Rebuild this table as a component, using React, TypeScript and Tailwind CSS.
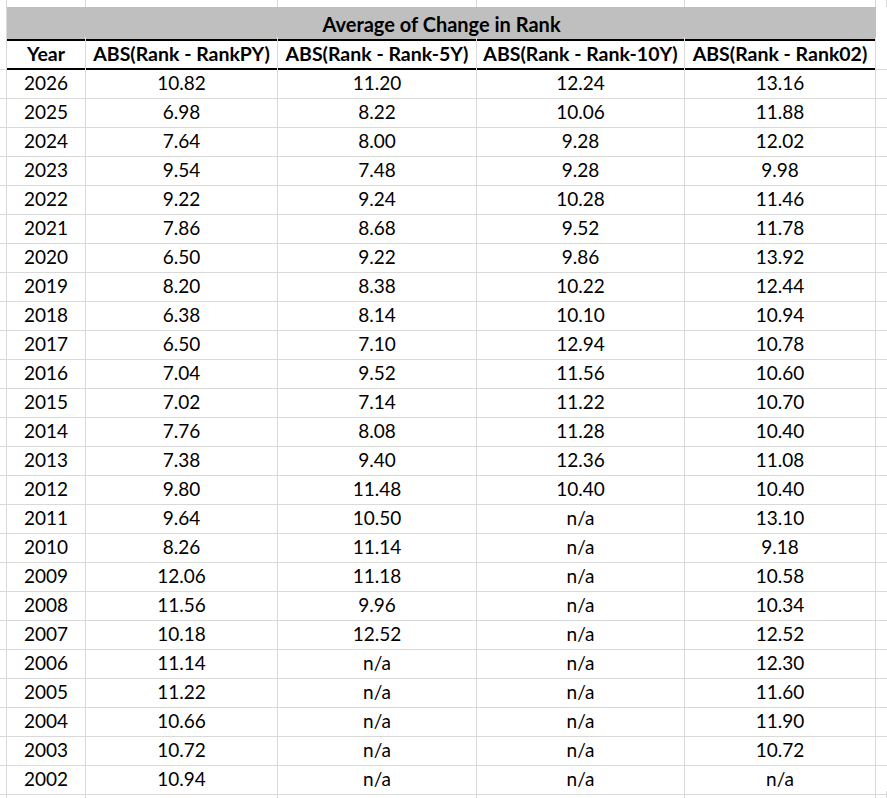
const COLS = ['ABS(Rank - RankPY)', 'ABS(Rank - Rank-5Y)', 'ABS(Rank - Rank-10Y)', 'ABS(Rank - Rank02)']

const ROWS: [string, string, string, string, string][] = [
  ['2026', '10.82', '11.20', '12.24', '13.16'],
  ['2025', '6.98', '8.22', '10.06', '11.88'],
  ['2024', '7.64', '8.00', '9.28', '12.02'],
  ['2023', '9.54', '7.48', '9.28', '9.98'],
  ['2022', '9.22', '9.24', '10.28', '11.46'],
  ['2021', '7.86', '8.68', '9.52', '11.78'],
  ['2020', '6.50', '9.22', '9.86', '13.92'],
  ['2019', '8.20', '8.38', '10.22', '12.44'],
  ['2018', '6.38', '8.14', '10.10', '10.94'],
  ['2017', '6.50', '7.10', '12.94', '10.78'],
  ['2016', '7.04', '9.52', '11.56', '10.60'],
  ['2015', '7.02', '7.14', '11.22', '10.70'],
  ['2014', '7.76', '8.08', '11.28', '10.40'],
  ['2013', '7.38', '9.40', '12.36', '11.08'],
  ['2012', '9.80', '11.48', '10.40', '10.40'],
  ['2011', '9.64', '10.50', 'n/a', '13.10'],
  ['2010', '8.26', '11.14', 'n/a', '9.18'],
  ['2009', '12.06', '11.18', 'n/a', '10.58'],
  ['2008', '11.56', '9.96', 'n/a', '10.34'],
  ['2007', '10.18', '12.52', 'n/a', '12.52'],
  ['2006', '11.14', 'n/a', 'n/a', '12.30'],
  ['2005', '11.22', 'n/a', 'n/a', '11.60'],
  ['2004', '10.66', 'n/a', 'n/a', '11.90'],
  ['2003', '10.72', 'n/a', 'n/a', '10.72'],
  ['2002', '10.94', 'n/a', 'n/a', 'n/a'],
]

const grid = 'grid grid-cols-[7px_79px_192px_199px_208px_191px_1fr]'
const cell = 'flex items-center justify-center border-r border-b border-[#d9d9d9] pt-[3px]'
const head =
  'flex items-center justify-center whitespace-nowrap border-r border-b-2 border-r-[#d9d9d9] border-b-black pt-[2px] text-[19.5px] font-bold'

export default function App() {
  return (
    <div className="h-[798px] w-[887px] overflow-hidden bg-white font-['Lato','Liberation_Sans',sans-serif] text-[19px] text-black">
      {/* partial row above the sheet */}
      <div className={`${grid} h-[7px]`}>
        {Array.from({ length: 7 }).map((_, i) => (
          <div key={i} className="border-r border-[#d9d9d9]" />
        ))}
      </div>

      {/* merged title row */}
      <div className={`${grid} h-[30px]`}>
        <div className="border-r border-[#d9d9d9]" />
        <div className="col-span-5 flex items-center justify-center border-b-2 border-black bg-[#bfbfbf] pt-[2px] text-[20px] font-bold">
          Average of Change in Rank
        </div>
        <div />
      </div>

      {/* header row */}
      <div className={`${grid} h-[29px]`}>
        <div className="border-r border-b border-[#d9d9d9]" />
        <div className={head}>Year</div>
        {COLS.map((c) => (
          <div key={c} className={head}>
            {c}
          </div>
        ))}
        <div className="border-b border-[#d9d9d9]" />
      </div>

      {ROWS.map((r) => (
        <div key={r[0]} className={`${grid} h-[29px]`}>
          <div className="border-r border-b border-[#d9d9d9]" />
          {r.map((v, i) => (
            <div key={i} className={cell}>
              {v}
            </div>
          ))}
          <div className="border-b border-[#d9d9d9]" />
        </div>
      ))}

      <div className={`${grid} h-[8px]`}>
        {Array.from({ length: 7 }).map((_, i) => (
          <div key={i} className="border-r border-[#d9d9d9]" />
        ))}
      </div>
    </div>
  )
}
